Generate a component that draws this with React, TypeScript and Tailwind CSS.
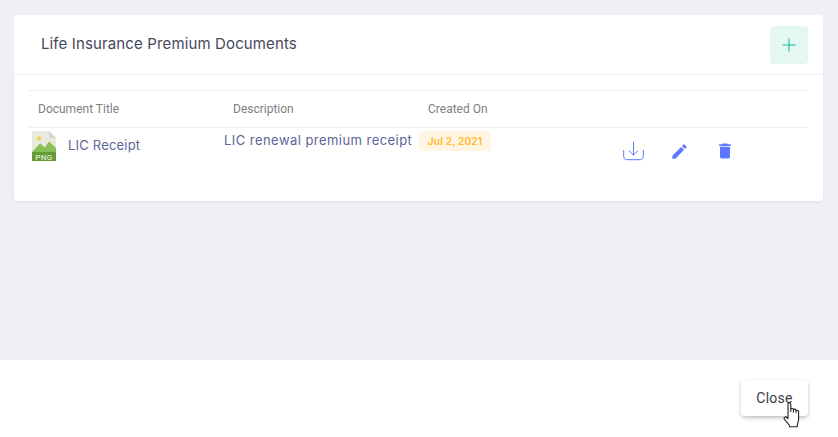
import { MdDelete, MdEdit } from "react-icons/md";

const HandCursor = () => (
  <svg
    className="absolute left-[42px] top-[22px]"
    width="18"
    height="26"
    viewBox="0 0 18 26"
    fill="#fff"
    stroke="#222"
    strokeWidth="1.1"
    strokeLinejoin="round"
    strokeLinecap="round"
  >
    <path d="M5 15V2.6C5 1.6 5.7 1 6.4 1S7.8 1.6 7.8 2.6V9.5V7.6C7.8 6.8 8.5 6.3 9.2 6.3S10.4 6.8 10.4 7.6V10V8.4C10.4 7.6 11 7.1 11.7 7.1S13 7.6 13 8.4V10.6V9.4C13 8.7 13.6 8.3 14.3 8.3S15.6 8.8 15.6 9.6V17C15.6 19 15.2 20.2 14.7 21.5C14.3 22.6 14.2 23.6 14.2 24.7H6.6C6.6 23.4 5.9 22.5 4.9 21.4L1.7 17.7C1 16.9 1 15.9 1.6 15.3C2.3 14.7 3.2 14.8 3.9 15.5L5 16.6Z" />
  </svg>
);

const PngIcon = () => (
  <svg width="24" height="30" viewBox="0 0 24 30">
    <path d="M0 0H17L24 7V30H0Z" fill="#e9e9e0" />
    <path d="M17 0L24 7H17Z" fill="#d9d7ca" />
    <circle cx="7" cy="7.5" r="2.2" fill="#f3d55b" />
    <path d="M0 21L8 12.5L13 16.5L17 10.5L24 17V21Z" fill="#88c057" />
    <rect y="21" width="24" height="9" fill="#659c35" />
    <text
      x="12"
      y="28.6"
      textAnchor="middle"
      fill="#f2f5ec"
      fontSize="8"
      letterSpacing="0.4"
      fontFamily="Roboto, sans-serif"
    >
      PNG
    </text>
  </svg>
);

const DownloadIcon = () => (
  <svg
    width="21"
    height="20"
    viewBox="0 0 21 20"
    fill="none"
    stroke="#5d78ff"
    strokeWidth="1"
    strokeLinecap="round"
    strokeLinejoin="round"
  >
    <path d="M0.7 9.5V15.5C0.7 17.5 2.2 18.7 3.7 18.7H17.3C18.8 18.7 20.3 17.5 20.3 15.5V9.5" />
    <path d="M10.5 1V14M6.3 10L10.5 14L14.7 10" />
  </svg>
);

export default function App() {
  return (
    <div className="flex h-[437px] w-[838px] flex-col overflow-hidden bg-white font-['Roboto',sans-serif]">
      <div className="flex h-[360px] flex-col bg-[#eff0f6] pl-[14px] pr-[15px] pt-[15px]">
        <div className="flex h-[59px] items-center justify-between rounded-t-[4px] bg-white pl-[27px] pr-[15px]">
          <span className="font-['Inter',sans-serif] text-[15px] tracking-[0.13px] text-[#48465b]">
            Life Insurance Premium Documents
          </span>
          <button className="flex h-[38px] w-[38px] items-center justify-center rounded-[4px] bg-[#e5f7f3]">
            <svg width="14" height="14" viewBox="0 0 14 14" stroke="#0abb87" strokeWidth="1">
              <path d="M7 0.5V13.5M0.5 7H13.5" />
            </svg>
          </button>
        </div>

        <div className="mt-px h-[126px] rounded-b-[4px] bg-white px-[15px] pt-[15px] shadow-[0_1px_3px_rgba(80,90,130,0.08)]">
          <div className="grid h-[38px] grid-cols-[195px_195px_195px_1fr] items-center border-y border-[#ebedf2] text-[12px] text-[#808080]">
            <div className="pl-[9px]">Document Title</div>
            <div className="pl-[9px]">Description</div>
            <div className="pl-[9px]">Created On</div>
            <div />
          </div>

          <div className="grid grid-cols-[195px_195px_195px_1fr] items-start">
            <div className="flex items-center gap-3 pl-[3px] pt-[3px]">
              <PngIcon />
              <span className="font-['Inter',sans-serif] text-[13px] tracking-[0.2px] text-[#5e6497]">
                LIC Receipt
              </span>
            </div>
            <div className="pt-[2px] font-['Inter',sans-serif] text-[13px] leading-[20px] tracking-[0.45px] text-[#5e6497]">
              LIC renewal premium receipt
            </div>
            <div className="pt-[3px]">
              <span className="flex h-5 w-[72px] items-center justify-center rounded-[3px] bg-[#fff5e2] font-['Inter',sans-serif] text-[10px] font-semibold tracking-[0.2px] text-[#ffb822]">
                Jul 2, 2021
              </span>
            </div>
            <div className="flex items-center pl-[9px] pt-[13px] text-[#5d78ff]">
              <DownloadIcon />
              <MdEdit size={19} className="ml-[26px]" />
              <MdDelete size={20} className="ml-[26px]" />
            </div>
          </div>
        </div>
      </div>

      <div className="flex flex-1 items-start justify-end pr-[30px] pt-5">
        <button className="relative h-9 w-[67px] rounded-[4px] bg-white text-[14px] tracking-[0.25px] text-[#3c3c44] shadow-[0_2px_4px_-1px_rgba(0,0,0,0.2),0_2px_5px_0_rgba(0,0,0,0.12)]">
          Close
          <HandCursor />
        </button>
      </div>
    </div>
  );
}
